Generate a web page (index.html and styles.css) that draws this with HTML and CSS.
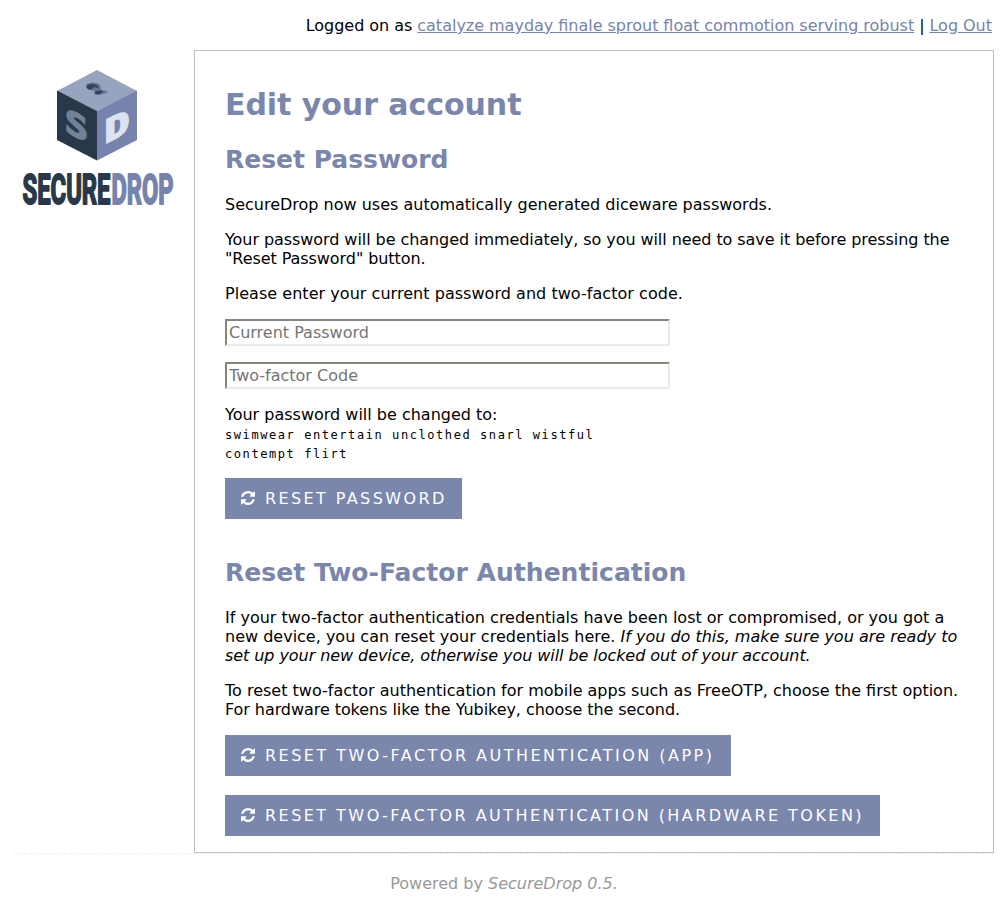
FILE: index.html
```html
<!DOCTYPE html>
<html lang="en">
<head>
<meta charset="utf-8">
<title>SecureDrop</title>
<link rel="stylesheet" href="styles.css">
</head>
<body>
<svg class="sprite" width="0" height="0"><symbol id="refresh" viewBox="0 0 1536 1536"><path d="M1511 928q0 5-1 7-64 268-268 434.500T764 1536q-146 0-282.500-55T238 1324l-129 129q-19 19-45 19t-45-19-19-45V960q0-26 19-45t45-19h448q26 0 45 19t19 45-19 45l-137 137q71 66 161 102t187 36q134 0 250-65t186-179q11-17 53-117 8-23 30-23h192q13 0 22.500 9.500t9.500 22.500zM1536 128v448q0 26-19 45t-45 19h-448q-26 0-45-19t-19-45 19-45l138-138Q969 256 768 256q-134 0-250 65T332 500q-11 17-53 117-8 23-30 23H50q-13 0-22.500-9.500T18 608v-7q65-268 270-434.500T768 0q146 0 284 55.500T1297 212l130-129q19-19 45-19t45 19 19 45z"/></symbol></svg>
<div class="page">
  <div class="userbar">Logged on as <a href="#">catalyze mayday finale sprout float commotion serving robust</a> | <a href="#">Log Out</a></div>
  <div class="columns">
    <svg class="logo" viewBox="0 0 164 165" role="img" aria-label="SecureDrop">
      <path fill="#98a3c0" d="M79 5l40 21-40 20-40-20z"/>
      <path fill="#283848" d="M39 25.500l40 20.500v49.500L39 75z"/>
      <path fill="#7683ac" d="M119 25.500L79 46v49.500L119 75z"/>
      <path fill="#66749c" d="M68 21.500q0-3.500 5.500-4 6-.3 8.500 2.500 1.200 1.800.3 3.300l2.200 2 5.500.7-1.500 2-8 2.200-4-1 .5-3.700q-4 .3-7-1-2-1.200-2-3z"/>
      <path fill="#35445e" d="M68.300 22.300q.5-2.800 5-3.200 5-.2 7 2.400l.3 2q-3-2-5.500-.7l-2 2q-3.800-.5-4.800-2.500zM76.800 26.200l6-.8 2.500 1.500-4.500 2.300-4.200-.7z"/>
      <text class="face face-s" transform="matrix(1 .5 0 1 47 66)" textLength="23" lengthAdjust="spacingAndGlyphs">S</text>
      <text class="face face-d" transform="matrix(1 -.5 0 1 86.500 79)" textLength="25" lengthAdjust="spacingAndGlyphs">D</text>
      <text class="word dark" transform="translate(4.500 138.500) scale(.5 1)" textLength="176" lengthAdjust="spacingAndGlyphs">SECURE</text>
      <text class="word light" transform="translate(93.500 138.500) scale(.5 1)" textLength="124" lengthAdjust="spacingAndGlyphs">DROP</text>
    </svg>
    <main class="panel">
      <h1>Edit your account</h1>
      <h2>Reset Password</h2>
      <p>SecureDrop now uses automatically generated diceware passwords.</p>
      <p class="tight">Your password will be changed immediately, so you will need to save it before pressing the "Reset Password" button.</p>
      <p class="loose">Please enter your current password and two-factor code.</p>
      <input type="password" placeholder="Current Password">
      <input type="text" placeholder="Two-factor Code">
      <p class="newpass">Your password will be changed to:<span class="code">swimwear entertain unclothed snarl wistful<br>contempt flirt</span></p>
      <button class="b1"><svg><use href="#refresh"/></svg>RESET PASSWORD</button>
      <h2 class="second">Reset Two-Factor Authentication</h2>
      <p>If your two-factor authentication credentials have been lost or compromised, or you got a new device, you can reset your credentials here. <em>If you do this, make sure you are ready to <span class="tight">set up your new device, otherwise you will be locked out of your account.</span></em></p>
      <p>To reset two-factor authentication for mobile apps such as FreeOTP, choose the first option. <span class="tight">For hardware tokens like the Yubikey, choose the second.</span></p>
      <button class="b2"><svg><use href="#refresh"/></svg>RESET TWO-FACTOR AUTHENTICATION (APP)</button>
      <button class="b3"><svg><use href="#refresh"/></svg>RESET TWO-FACTOR AUTHENTICATION (HARDWARE TOKEN)</button>
    </main>
  </div>
  <footer>Powered by <em>SecureDrop 0.5.</em></footer>
</div>
</body>
</html>
```
FILE: styles.css
```css
* { box-sizing: border-box; }
body { margin: 0; background: #fff; color: #000; font: 16px/19px "DejaVu Sans", sans-serif; }
.sprite { display: block; }
.page { width: 980px; margin: 0 auto; }
.userbar { height: 50px; padding: 16px 2px 0 0; text-align: right; word-spacing: -.15px; }
a { color: #7683ac; }
.columns { display: flex; height: 803px; }
.logo { width: 164px; height: 165px; margin: 15px 12px 0 4px; flex: none; overflow: visible; }
.word { font: bold 43px Roboto, sans-serif; stroke-width: 2px; stroke-linejoin: round; }
.dark { fill: #283848; stroke: #283848; }
.light { fill: #7683ac; stroke: #7683ac; }
.face { font: bold 32px "DejaVu Sans Mono", monospace; stroke-width: 1.8px; }
.face-s { fill: #708298; stroke: #708298; }
.face-d { fill: #dbe3f0; stroke: #dbe3f0; }
.panel { width: 800px; padding: 36px 30px 0; border: 1px solid #bfbfbf; }
h1, h2 { color: #7a86ac; font-weight: bold; margin: 0; }
h1 { font-size: 30px; line-height: 36px; letter-spacing: -.05px; }
h2 { font-size: 25px; line-height: 30px; margin: 22px 0 20px; }
h2.second { margin: 39px 0 20px; letter-spacing: .03px; }
p { margin: 0 0 16px; }
p.newpass { margin-bottom: 14px; }
.tight { letter-spacing: -.066px; }
.loose { letter-spacing: .04px; }
input { display: block; width: 445px; height: 27px; margin: 0 0 16px; padding: 1px 2px; border: 2px solid; border-color: #88857a #ebebe6 #ebebe6 #88857a; background: #fff; font: 16px "DejaVu Sans", sans-serif; }
input::placeholder { color: #757575; opacity: 1; }
.code { display: block; padding-top: 2px; font: 12px/19px "DejaVu Sans Mono", monospace; letter-spacing: 1.57px; }
button { display: flex; align-items: center; height: 41px; margin: 0 0 19px; padding: 0 0 0 16px; border: 0; background: #7a86ac; color: #fff; font: 16px "DejaVu Sans", sans-serif; letter-spacing: 2.48px; white-space: nowrap; }
button svg { width: 14px; height: 14px; margin: 0 10px 1px 0; fill: #fff; }
.b1 { width: 237px; letter-spacing: 2.4px; }
.b2 { width: 506px; }
.b3 { width: 655px; letter-spacing: 2.46px; }
footer { height: 55px; padding-top: 20px; border-top: 1px dashed #eee; color: #999; text-align: center; }
```
